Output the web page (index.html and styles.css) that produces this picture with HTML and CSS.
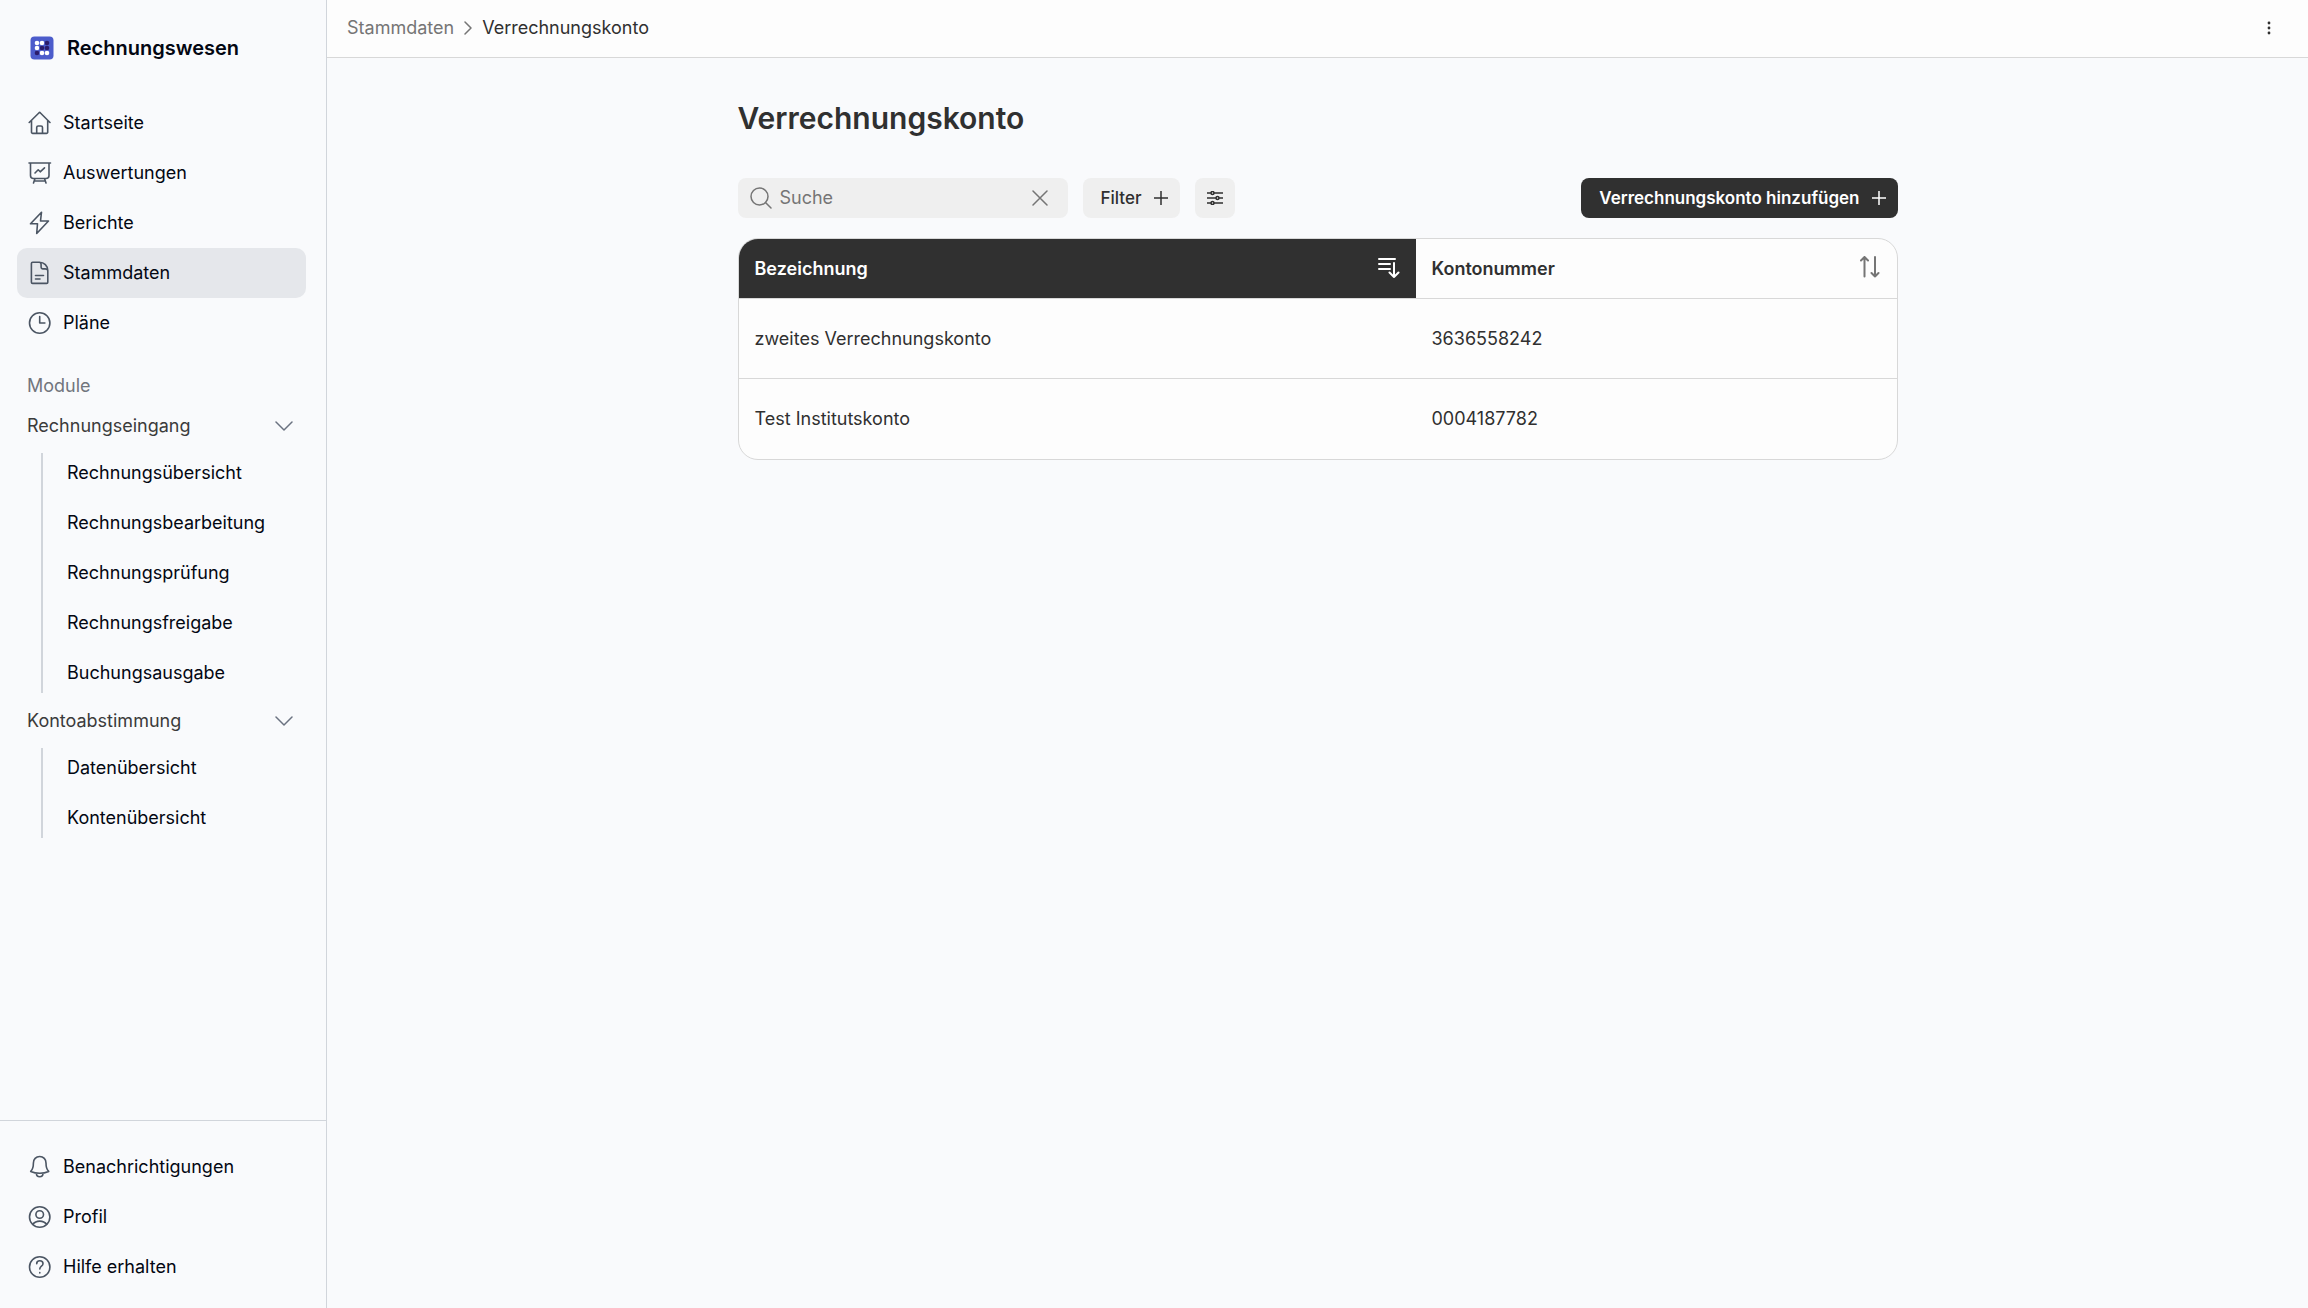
FILE: index.html
```html
<!DOCTYPE html>
<html lang="de">
<head>
  <meta charset="UTF-8">
  <meta name="viewport" content="width=device-width, initial-scale=1">
  <title>Verrechnungskonto - Rechnungswesen</title>
  <link rel="stylesheet" href="styles.css">
</head>
<body>
  <div class="app">
    <aside class="sidebar">
      <a class="brand" href="#">
        <svg class="brand-logo" viewBox="0 0 24 24" aria-hidden="true">
          <rect x="0.5" y="0.5" width="23" height="23" rx="4" fill="#4c5ccb"/>
          <g fill="#fff">
            <circle cx="7" cy="7" r="2.3"/><circle cx="12" cy="7" r="2.3"/>
            <circle cx="7" cy="12" r="2.3"/>
            <circle cx="12" cy="17" r="2.3"/><circle cx="17" cy="17" r="2.3"/>
          </g>
          <g fill="#2b1c6b">
            <circle cx="17" cy="7" r="2.3"/><circle cx="12" cy="12" r="2.3"/>
            <circle cx="17" cy="12" r="2.3"/><circle cx="7" cy="17" r="2.3"/>
          </g>
        </svg>
        <span>Rechnungswesen</span>
      </a>

      <nav class="nav">
        <a class="nav-item" href="#">
          <svg class="icon" viewBox="0 0 24 24"><path d="M1.2 11.5 11.1 1.7a.8.8 0 0 1 1.100 0L22 11.500M3.500 9.500v11.700a1.200 1.200 0 0 0 1.200 1.200h13.800a1.200 1.200 0 0 0 1.200-1.200V9.500M8.700 22v-5.500a1.500 1.500 0 0 1 1.500-1.500h2.800a1.500 1.500 0 0 1 1.500 1.500V22"/></svg>
          Startseite
        </a>
        <a class="nav-item" href="#">
          <svg class="icon" viewBox="0 0 24 24"><path d="M1 2h21.500M2.500 2v12.500a3 3 0 0 0 3 3h12.500a3 3 0 0 0 3-3V2M7 17.500l-1.500 4.500M16.500 17.500l1.500 4.500M6.200 20h11.100M7 12l3.200-3.200 2 2 4.300-4"/></svg>
          Auswertungen
        </a>
        <a class="nav-item" href="#">
          <svg class="icon" viewBox="0 0 24 24"><path d="M13.500 1.200 2.500 12.800h7L8.700 22.500 20.500 10h-8z"/></svg>
          Berichte
        </a>
        <a class="nav-item active" href="#" aria-current="page">
          <svg class="icon" viewBox="0 0 24 24"><path d="M11.500 1.200H4.600a1.200 1.200 0 0 0-1.200 1.200v18.800a1.200 1.200 0 0 0 1.200 1.200h14a1.200 1.200 0 0 0 1.200-1.200V9.500c0-4.600-3.700-8.300-8.300-8.300zM11.500 1.200c1.200.3 1.600 1.300 1.600 2.400v2.700a1.600 1.600 0 0 0 1.600 1.600h2.500c1.200 0 2.200.5 2.600 1.600M7.500 14.500h8M7.500 18h4.500"/></svg>
          Stammdaten
        </a>
        <a class="nav-item" href="#">
          <svg class="icon" viewBox="0 0 24 24"><circle cx="11.700" cy="12" r="10.200"/><path d="M11.700 5.500V12h5.200"/></svg>
          Pläne
        </a>
      </nav>

      <div class="modules">
        <h2 class="modules-title">Module</h2>
        <button class="group-toggle" type="button" aria-expanded="true">
          Rechnungseingang
          <svg class="chevron" viewBox="0 0 18 10"><path d="M1 1l8 8 8-8"/></svg>
        </button>
        <nav class="subnav">
          <a class="subnav-item" href="#">Rechnungsübersicht</a>
          <a class="subnav-item" href="#">Rechnungsbearbeitung</a>
          <a class="subnav-item" href="#">Rechnungsprüfung</a>
          <a class="subnav-item" href="#">Rechnungsfreigabe</a>
          <a class="subnav-item" href="#">Buchungsausgabe</a>
        </nav>
        <button class="group-toggle" type="button" aria-expanded="true">
          Kontoabstimmung
          <svg class="chevron" viewBox="0 0 18 10"><path d="M1 1l8 8 8-8"/></svg>
        </button>
        <nav class="subnav">
          <a class="subnav-item" href="#">Datenübersicht</a>
          <a class="subnav-item" href="#">Kontenübersicht</a>
        </nav>
      </div>

      <nav class="nav nav-bottom">
        <a class="nav-item" href="#">
          <svg class="icon" viewBox="0 0 24 24"><path d="M11.700 1.500c-3.800 0-6.300 2.900-6.300 6.500 0 4.500-.5 6.300-2.700 8.400 2.800 1.200 5.900 1.800 9 1.800s6.200-.6 9-1.800C18.500 14.300 18 12.500 18 8c0-3.600-2.500-6.500-6.300-6.500zM8.400 18.200c0 2 1.400 3.500 3.300 3.500s3.300-1.500 3.300-3.500"/></svg>
          Benachrichtigungen
        </a>
        <a class="nav-item" href="#">
          <svg class="icon" viewBox="0 0 24 24"><circle cx="11.700" cy="12" r="10.200"/><circle cx="11.700" cy="9.500" r="3.800"/><path d="M4.700 19.300c1.700-2.200 4.100-3.200 7-3.200s5.300 1 7 3.200"/></svg>
          Profil
        </a>
        <a class="nav-item" href="#">
          <svg class="icon" viewBox="0 0 24 24"><circle cx="11.700" cy="12" r="10.200"/><path d="M8.700 8.700c0-1.800 1.300-2.900 3.100-2.900s3.200 1.100 3.200 2.900c0 2.500-3.200 2.600-3.200 5.300M11.800 17.600v.4"/></svg>
          Hilfe erhalten
        </a>
      </nav>
    </aside>

    <div class="page">
      <header class="topbar">
        <nav class="breadcrumb" aria-label="Breadcrumb">
          <a class="breadcrumb-link" href="#">Stammdaten</a>
          <svg class="breadcrumb-sep" viewBox="0 0 8 14"><path d="M1 1l6 6-6 6"/></svg>
          <span>Verrechnungskonto</span>
        </nav>
        <button class="more" type="button" aria-label="Mehr">
          <svg viewBox="0 0 4 14"><circle cx="2" cy="2" r="1.400"/><circle cx="2" cy="7" r="1.400"/><circle cx="2" cy="12" r="1.400"/></svg>
        </button>
      </header>

      <main class="content">
        <h1>Verrechnungskonto</h1>

        <div class="toolbar">
          <div class="search">
            <svg class="search-icon" viewBox="0 0 22 22"><circle cx="9.500" cy="9.500" r="8.500"/><path d="M15.500 15.500l5.500 5.500"/></svg>
            <input class="search-input" type="text" placeholder="Suche" aria-label="Suche">
            <button class="search-clear" type="button" aria-label="Suche leeren">
              <svg viewBox="0 0 16 16"><path d="M1 1l14 14M15 1 1 15"/></svg>
            </button>
          </div>
          <button class="btn" type="button">
            Filter
            <svg class="plus" viewBox="0 0 14 14"><path d="M7 0v14M0 7h14"/></svg>
          </button>
          <button class="btn btn-square" type="button" aria-label="Ansicht anpassen">
            <svg class="sliders" viewBox="0 0 16 14"><path d="M0 2h4M7 2h9M0 7h9M12 7h4M0 12h4M7 12h9"/><circle cx="5.500" cy="2" r="1.500"/><circle cx="10.500" cy="7" r="1.500"/><circle cx="5.500" cy="12" r="1.500"/></svg>
          </button>
          <button class="btn btn-primary" type="button">
            Verrechnungskonto hinzufügen
            <svg class="plus" viewBox="0 0 14 14"><path d="M7 0v14M0 7h14"/></svg>
          </button>
        </div>

        <div class="table-wrap">
          <table class="table">
            <colgroup>
              <col class="col-name">
              <col>
            </colgroup>
            <thead>
              <tr>
                <th class="sorted" scope="col" aria-sort="descending">
                  <button class="sort" type="button">
                    Bezeichnung
                    <svg class="sort-icon" viewBox="0 0 22 22"><path d="M1 3h16M1 8h11M1 13h11M16 7v14M11.500 16.500l4.500 4.500 4.500-4.500"/></svg>
                  </button>
                </th>
                <th scope="col">
                  <button class="sort" type="button">
                    Kontonummer
                    <svg class="sort-icon" viewBox="0 0 22 22"><path d="M5.500 20.500V1M2 4.500 5.500 1 9 4.500M16 1v19.500M12.500 17l3.500 3.500 3.500-3.500"/></svg>
                  </button>
                </th>
              </tr>
            </thead>
            <tbody>
              <tr>
                <td>zweites Verrechnungskonto</td>
                <td>3636558242</td>
              </tr>
              <tr>
                <td>Test Institutskonto</td>
                <td>0004187782</td>
              </tr>
            </tbody>
          </table>
        </div>
      </main>
    </div>
  </div>
</body>
</html>
```
FILE: styles.css
```css
* { box-sizing: border-box; }

body {
  margin: 0;
  font-family: Inter, "Liberation Sans", sans-serif;
  font-size: 18px;
  line-height: 24px;
  color: #303030;
  background: #f9fafc;
}

a { color: inherit; text-decoration: none; }
button { font: inherit; color: inherit; background: none; border: 0; padding: 0; cursor: pointer; }
svg { display: block; flex: none; fill: none; stroke: currentColor; stroke-width: 1.5; stroke-linecap: round; stroke-linejoin: round; }

.app { display: flex; min-height: 100vh; }

/* sidebar */
.sidebar {
  display: flex;
  flex-direction: column;
  flex: none;
  width: 327px;
  border-right: 1px solid #d1d5db;
  color: #030712;
}

.brand {
  display: flex;
  align-items: center;
  gap: 13px;
  padding: 36px 30px;
  margin-bottom: 2px;
  font-size: 20px;
  font-weight: 600;
}
.brand-logo { width: 24px; height: 24px; stroke: none; }

.nav { display: flex; flex-direction: column; padding: 0 20px 0 17px; }
.nav-item {
  display: flex;
  align-items: center;
  gap: 11px;
  height: 50px;
  padding: 0 11px;
  border-radius: 10px;
}
.nav-item.active { background: #e5e7eb; }
.icon { width: 24px; height: 24px; stroke: #4b5563; stroke-width: 1.6; }

.nav-bottom { margin-top: auto; padding-top: 21px; padding-bottom: 16px; border-top: 1px solid #d1d5db; }

.modules { padding: 26px 27px; }
.modules-title { margin: 0 0 12px; font-size: 18px; font-weight: 400; line-height: 24px; color: #71757d; }
.group-toggle {
  display: flex;
  align-items: center;
  justify-content: space-between;
  width: 100%;
  height: 32px;
  padding-right: 6px;
  color: #3b3b3b;
}
.chevron { width: 18px; height: 10px; stroke: #6b7280; }

.subnav {
  display: flex;
  flex-direction: column;
  gap: 10px;
  margin: 11px 0 12px 14px;
  padding-left: 24px;
  border-left: 2px solid #d1d5db;
}
.subnav-item { line-height: 40px; }

/* top bar */
.page { flex: 1; min-width: 0; }
.topbar {
  display: flex;
  align-items: center;
  justify-content: space-between;
  height: 58px;
  padding: 0 33px 2px 20px;
  background: #fdfdfd;
  border-bottom: 1px solid #d8d8d8;
}
.breadcrumb { display: flex; align-items: center; gap: 10px; }
.breadcrumb-link, .breadcrumb-sep { color: #757575; }
.breadcrumb-sep { width: 8px; height: 14px; }
.more { padding: 4px; }
.more svg { width: 4px; height: 14px; fill: #303030; stroke: none; }

/* content */
.content { max-width: 1160px; margin: 0 auto; padding-top: 40px; }

h1 { margin: 0 0 40px; font-size: 30px; font-weight: 600; line-height: 40px; }

.toolbar { display: flex; align-items: center; gap: 15px; margin-bottom: 20px; }
.search {
  display: flex;
  align-items: center;
  gap: 8px;
  width: 330px;
  height: 40px;
  padding: 0 20px 0 12px;
  border-radius: 8px;
  background: #efefef;
  color: #757575;
}
.search-icon { width: 22px; height: 22px; }
.search-input { flex: 1; min-width: 0; padding: 0; border: 0; outline: 0; background: none; font: inherit; color: #303030; }
.search-input::placeholder { color: #757575; opacity: 1; }
.search-clear svg { width: 16px; height: 16px; }

.btn {
  display: flex;
  align-items: center;
  justify-content: center;
  gap: 12px;
  height: 40px;
  padding: 0 12px 0 18px;
  border-radius: 8px;
  background: #efefef;
  font-size: 17px;
  font-weight: 500;
}
.btn-square { width: 40px; padding: 0; }
.btn-primary { margin-left: auto; background: #303030; color: #fff; font-weight: 600; }
.plus { width: 14px; height: 14px; }
.sliders { width: 16px; height: 14px; }

/* table */
.table-wrap { overflow: hidden; border: 1px solid #d8d8d8; border-radius: 20px; background: #fdfdfd; }
.table { width: 100%; border-spacing: 0; table-layout: fixed; }
.col-name { width: 677px; }
.table th,
.table td { padding: 0 16px; border-bottom: 1px solid #d8d8d8; background-clip: padding-box; text-align: left; }
.table th { height: 60px; font-weight: 600; }
.table td { height: 80px; }
.table tbody tr:last-child td { border-bottom: 0; }
.table .sorted { background-color: #303030; color: #fff; }
.sort { display: flex; align-items: center; justify-content: space-between; width: 100%; }
.sort-icon { width: 22px; height: 22px; margin-bottom: 4px; stroke-width: 2; }
th:not(.sorted) .sort-icon { stroke: #757575; }
```
